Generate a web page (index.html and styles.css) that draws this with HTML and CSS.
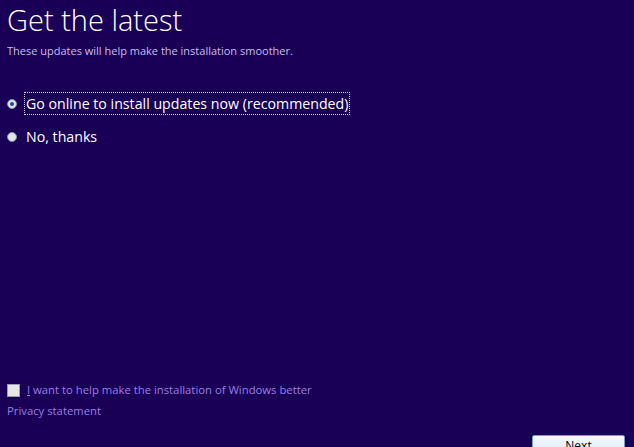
FILE: index.html
```html
<!DOCTYPE html>
<html lang="en">
<head>
    <meta charset="UTF-8">
    <title>Get the latest</title>
    <link rel="stylesheet" href="styles.css">
</head>
<body>
<div class="page">
    <h1 class="title">Get the latest</h1>
    <p class="subtitle">These updates will help make the installation smoother.</p>
    <div class="options">
        <label class="option focused">
            <span class="radio checked"></span>
            <span class="option-text">Go online to install updates now (recommended)</span>
        </label>
        <label class="option">
            <span class="radio"></span>
            <span class="option-text">No, thanks</span>
        </label>
    </div>
    <div class="footer">
        <label class="check-row">
            <span class="checkbox"></span>
            <span class="link"><u>I</u> want to help make the installation of Windows better</span>
        </label>
        <a class="link privacy">Privacy statement</a>
        <div class="buttons">
            <button class="btn">Next</button>
        </div>
    </div>
</div>
</body>
</html>
```

FILE: styles.css
```css
/*reset*/
body,h1,p,button,label{
    padding: 0;
    margin: 0;
}
html,body{
    height: 100%;
}
body{
    background: #190056;
    font-family: "Open Sans","Liberation Sans",sans-serif;
    color: #fff;
    overflow: hidden;
}
.page{
    height: 100%;
    display: flex;
    flex-direction: column;
    padding: 0 0 0 7px;
    box-sizing: border-box;
}
.title{
    font-weight: 300;
    font-size: 29px;
    line-height: 40px;
}
.subtitle{
    font-size: 11px;
    line-height: 14px;
    margin-top: 4px;
    color: #c9bdea;
}
.options{
    margin-top: 34px;
    display: flex;
    flex-direction: column;
    gap: 10px;
}
.option{
    display: flex;
    align-items: center;
    gap: 7px;
    font-size: 14.2px;
    line-height: 19px;
}
.option-text{
    padding: 1px 1px;
    border: 1px dotted transparent;
}
.focused .option-text{
    border-color: #d8d0f0;
}
.radio{
    width: 10px;
    height: 10px;
    border-radius: 50%;
    background: #e4e4e4;
    border: 1px solid #8c8ca8;
    box-sizing: border-box;
    position: relative;
}
.radio.checked::after{
    content: "";
    position: absolute;
    left: 2px;
    top: 2px;
    width: 4px;
    height: 4px;
    border-radius: 50%;
    background: #1f4f86;
}
.footer{
    margin-top: auto;
    display: flex;
    flex-direction: column;
}
.check-row{
    display: flex;
    align-items: center;
    gap: 7px;
}
.checkbox{
    width: 11px;
    height: 11px;
    background: #e6e6e6;
    border: 1px solid #9a9ab0;
}
.link{
    color: #9a7ee4;
    font-size: 11.3px;
    line-height: 16px;
}
.privacy{
    margin-top: 5px;
}
.buttons{
    display: flex;
    justify-content: flex-end;
    padding-right: 9px;
    margin-top: 16px;
    height: 12px;
}
.btn{
    flex: none;
    width: 93px;
    height: 24px;
    border: 1px solid #7a9cc6;
    border-radius: 2px;
    background: linear-gradient(#f4f9fe,#d6e8f8);
    font-family: inherit;
    font-size: 12px;
    color: #000;
    padding-bottom: 4px;
}
```
